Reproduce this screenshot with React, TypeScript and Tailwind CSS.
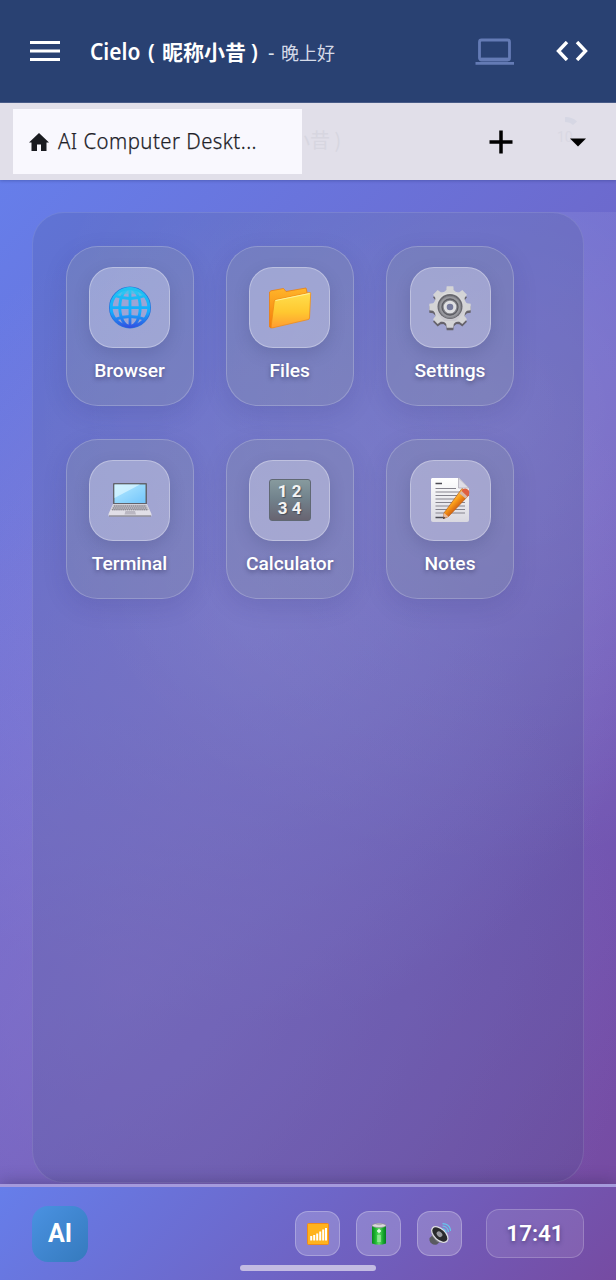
import React from 'react';

function Globe() {
  return (
    <svg viewBox="0 0 44 44" className="h-11 w-11">
      <defs><linearGradient id="gl" gradientUnits="userSpaceOnUse" x1="22" y1="2" x2="22" y2="42"><stop offset="0" stopColor="#21c3f0" /><stop offset=".6" stopColor="#12adff" /><stop offset="1" stopColor="#344be0" /></linearGradient></defs>
      <circle cx="22" cy="21.500" r="19.800" fill="none" stroke="#2775dc" strokeWidth="2.400" />
      <g fill="none" stroke="url(#gl)" strokeWidth="2.900">
        <circle cx="22" cy="21.500" r="18.800" />
        <ellipse cx="22" cy="21.500" rx="10.200" ry="19" />
        <path d="M20.600 2H23.400V41H20.600ZM2 20.200H42V23H2Z" fill="url(#gl)" stroke="none" />
        <path d="M6.500 9.500Q22 15.500 37.500 9.500M6.500 33.500Q22 27.500 37.500 33.500" />
      </g>
      <path d="M8 9Q22 -1 36 9L33 10Q22 5 11 10Z" fill="#34caf2" opacity=".6" />
    </svg>
  );
}

function Folder() {
  return (
    <svg viewBox="0 0 44 44" className="h-11 w-11">
      <defs>
        <linearGradient id="fo" x1="0" y1="0" x2="0" y2="1"><stop stopColor="#ffdf4e" /><stop offset=".55" stopColor="#ffc830" /><stop offset="1" stopColor="#ff9b31" /></linearGradient>
        <linearGradient id="fb" x1="0" y1="0" x2="0" y2="1"><stop stopColor="#ffb52a" /><stop offset="1" stopColor="#f57a08" /></linearGradient>
      </defs>
      <path d="M1.500 6L3 4.800L15.500 2.500L18 5.500L38 2L39 6L38 30L3 42L1.500 41Z" fill="url(#fb)" stroke="#e97e13" strokeWidth=".8" />
      <path d="M8 13.500L41.500 6.500Q42.800 6.300 42.700 7.500L41.500 32Q41.400 33.300 40 33.600L4 42Q3 42 3.200 40L6.300 15Q6.500 13.700 8 13.500Z" fill="url(#fo)" stroke="#f08d17" strokeWidth=".8" />
      <path d="M7.500 14.500L41.500 7.500" stroke="#fff29a" strokeWidth="1" />
    </svg>
  );
}

function Gear() {
  const teeth = [0, 45, 90, 135, 180, 225, 270, 315];
  const tooth = 'M15.500 8L18.200 5L18.700 1.300H25.300L25.800 5L28.500 8Z';
  return (
    <svg viewBox="0 0 44 46" className="h-[46px] w-11">
      <defs><linearGradient id="ge" x1="0" y1="0" x2="0" y2="1"><stop stopColor="#dedede" /><stop offset="1" stopColor="#c9c7ce" /></linearGradient></defs>
      <g transform="translate(0 2.500)" fill="#66636c"><circle cx="22" cy="22" r="16" />{teeth.map((a) => <path key={a} d={tooth} transform={`rotate(${a} 22 22)`} />)}</g>
      <g fill="url(#ge)"><circle cx="22" cy="22" r="16.300" />{teeth.map((a) => <path key={a} d={tooth} fill="#d4d4d6" transform={`rotate(${a} 22 22)`} />)}</g>
      <circle cx="22" cy="21.500" r="12.500" fill="#68686f" />
      <circle cx="22" cy="22" r="10.800" fill="#98989e" stroke="#85858b" />
      <circle cx="22" cy="22" r="8" fill="#85858c" stroke="#5c5c63" strokeWidth="1.300" />
      <circle cx="22" cy="22" r="4.800" fill="#777b9d" stroke="#dfdfe2" strokeWidth="3" />
    </svg>
  );
}

function Laptop() {
  return (
    <svg viewBox="0 0 44 44" className="h-11 w-11">
      <defs><linearGradient id="la" x1="0" y1="0" x2="1" y2="1"><stop stopColor="#b5eaff" /><stop offset="1" stopColor="#73c5fb" /></linearGradient></defs>
      <rect x="5" y="5" width="34" height="22" rx="1" fill="#63636b" />
      <rect x="6.500" y="6.500" width="31" height="18.500" fill="url(#la)" />
      <path d="M6.500 6.500H32L6.500 20Z" fill="#ddf7ff" opacity=".7" />
      <path d="M5 26H39L43.500 36V37.500Q43.500 38.500 42 38.500H2Q.5 38.500 .5 37.500V36Z" fill="#e1dfe7" />
      <path d="M5.500 26.500H38.500L41 32H3Z" fill="#c4c2ca" />
      <path d="M6 28H38M5 30H39M4 31.800H40" stroke="#77757e" strokeWidth="1" strokeDasharray="1.500 .6" />
      <path d="M17.500 33H27L28 36.500H16.500Z" fill="#bab7c2" />
      <path d="M1 38H43" stroke="#6f6c77" strokeWidth="1.200" />
    </svg>
  );
}

function Numbers() {
  return (
    <div className="grid h-[42px] w-[42px] grid-cols-[14px_14px] grid-rows-[17px_17px] content-center justify-center rounded-[3px] border border-[#606873] bg-[linear-gradient(180deg,#879a9e,#72838d_45%,#686471)] text-center text-[17px] font-bold leading-[17px] text-[#f4f4f4] [text-shadow:1px_1px_1px_#30354399]">
      <span>1</span><span>2</span><span>3</span><span>4</span>
    </div>
  );
}

function Memo() {
  return (
    <svg viewBox="0 0 44 46" className="h-[46px] w-11">
      <defs>
        <linearGradient id="me" x1="0" y1="0" x2="0" y2="1"><stop stopColor="#ffffff" /><stop offset="1" stopColor="#d9d8e0" /></linearGradient>
        <linearGradient id="pe" gradientUnits="userSpaceOnUse" x1="23" y1="22" x2="30" y2="29"><stop stopColor="#ffc14a" /><stop offset=".5" stopColor="#f99a17" /><stop offset="1" stopColor="#d86a13" /></linearGradient>
      </defs>
      <path d="M4 1H31L41 11V43Q41 45 39 45H5Q3 45 3 43V2Z" fill="url(#me)" />
      <path d="M30.500 1V11H41Z" fill="#e0dee6" stroke="#aaa8b4" strokeWidth=".7" />
      <path d="M7.500 6.500H14M7.500 40.500H16" stroke="#4c4b53" strokeWidth="1.400" />
      <path d="M7.500 11.500H28M7.500 15H37M7.500 18.500H37M7.500 22H37M7.500 25.500H37M7.500 29H37M7.500 32.500H37M7.500 36H37" stroke="#85838d" strokeWidth="1.100" />
      <path d="M16 36L15.500 41.500L20.500 39.500L41 18L34 11.500Z" fill="url(#pe)" stroke="#b5601d" strokeWidth=".7" />
      <path d="M33.500 14L35 12Q38 10.500 40.500 13Q42 15 41 17.500L39.500 20Z" fill="#df5f40" />
      <path d="M31.500 16.500L33.500 14L39.500 19.500L37.500 21.500Z" fill="#d8b7a8" />
      <path d="M16 36L15.200 41.500L20.500 39.500Z" fill="#e8ba9c" /><path d="M15.500 39.500L15 42L17.500 41Z" fill="#373037" />
    </svg>
  );
}

function Signal() {
  return <svg viewBox="0 0 22 22" className="h-[22px] w-[22px]"><rect x=".5" y=".5" width="21" height="21" rx="1" fill="#ffb31d" stroke="#f18a19" /><path d="M4.200 13V17.500M7.200 12V17.500M10.200 10.500V17.500M13.200 8.500V17.500M16.200 6.500V17.500M19 5V17.500" stroke="#fff" strokeWidth="2" /></svg>;
}

function Battery() {
  return (
    <svg viewBox="0 0 22 22" className="h-[22px] w-[22px]">
      <defs><linearGradient id="ba"><stop stopColor="#07861d" /><stop offset=".28" stopColor="#23bd35" /><stop offset=".5" stopColor="#66de6b" /><stop offset=".78" stopColor="#18aa2e" /><stop offset="1" stopColor="#067b22" /></linearGradient></defs>
      <path d="M4 2.500H18V20.500Q11 23 4 20.500Z" fill="url(#ba)" />
      <ellipse cx="11" cy="2.500" rx="7" ry="2" fill="#dbdadd" stroke="#88858a" strokeWidth=".6" /><ellipse cx="11" cy="1.300" rx="3" ry="1" fill="#b1afb4" />
      <path d="M11 6V10M9 8H13" stroke="#eaffed" strokeWidth="1.300" />
      <path d="M9 12H13V19H9Z" fill="#baf6bb" opacity=".5" />
    </svg>
  );
}

function Speaker() {
  return (
    <svg viewBox="0 0 22 22" className="h-[22px] w-[22px]">
      <path d="M.5 15L4 12L11 18.500L8 21.500Q2 22.500 .5 17.500Z" fill="#5a5a60" />
      <path d="M2.500 7L15 20L8 19L3 13Z" fill="#77777d" />
      <ellipse cx="10.800" cy="11.500" rx="9.800" ry="5.600" transform="rotate(42 10.800 11.500)" fill="#29292c" stroke="#dddce3" strokeWidth="1.300" />
      <ellipse cx="10.500" cy="11.200" rx="3.200" ry="2.400" transform="rotate(42 10.500 11.200)" fill="#98989f" />
      <path d="M13.500 5.500Q16.800 6 17.200 9.500M13.500 3Q19 3.500 19.500 9M13.500 .7Q21 1 21.700 8" fill="none" stroke="#63c8ec" strokeWidth="1.200" />
    </svg>
  );
}

const apps = [
  { name: 'Browser', icon: <Globe /> }, { name: 'Files', icon: <Folder /> }, { name: 'Settings', icon: <Gear /> },
  { name: 'Terminal', icon: <Laptop /> }, { name: 'Calculator', icon: <Numbers /> }, { name: 'Notes', icon: <Memo /> },
];

function Header() {
  return (
    <header className="flex h-[103px] items-center border-b border-[#4b5f89] bg-[#294172] pl-[30px] pr-[28px] text-white">
      <svg viewBox="0 0 30 20" className="h-5 w-[30px]"><path d="M0 1.500H30M0 10H30M0 18.500H30" stroke="white" strokeWidth="3" /></svg>
      <h1 className="ml-[30px] flex h-[34px] items-baseline whitespace-nowrap leading-[34px]">
        <span className="w-[58px] origin-left scale-x-[0.91] font-['Noto_Sans',sans-serif] text-[23px] font-semibold">Cielo</span>
        <span className="w-[14px] font-['Noto_Sans',sans-serif] text-[21px] font-semibold">(</span>
        <span className="w-[89px] font-['Noto_Sans_CJK_SC',sans-serif] text-[21px] font-bold">昵称小昔</span>
        <span className="w-[17px] font-['Noto_Sans',sans-serif] text-[21px] font-semibold">)</span>
        <span className="w-[13px] font-['Noto_Sans',sans-serif] text-[20px] text-[#dce1ec]">-</span>
        <span className="font-['Noto_Sans_CJK_SC',sans-serif] text-[18px] font-normal text-[#d5dae8]">晚上好</span>
      </h1>
      <svg viewBox="0 0 40 28" className="ml-auto mt-px h-7 w-10" fill="none" stroke="#647bb5" strokeWidth="2.800"><rect x="4.500" y="2" width="30" height="20" rx="2" /><path d="M6 21H34" /><path d="M.5 25.300H39" /></svg>
      <svg viewBox="0 0 32 20" className="ml-[41px] h-5 w-8" fill="none" stroke="white" strokeWidth="3.400"><path d="M11 1L2.500 10L11 19M21 1L29.500 10L21 19" /></svg>
    </header>
  );
}

function TabBar() {
  return (
    <div className="relative z-10 flex h-[77px] items-center bg-[#e1dfe9] pl-[13px] shadow-[0_1px_3px_#24347055]">
      <div className="z-10 flex h-[65px] w-[289px] items-center bg-[#f9f8fe] pl-[16px] text-[#202027]">
        <svg viewBox="0 0 20 18" className="h-[18px] w-5" fill="#1a1b20"><path d="M10 0L20 9.500H17.500V18H12V11.500H8V18H2.500V9.500H0Z" /></svg>
        <span className="-mt-[2px] ml-[9px] origin-left scale-x-[0.925] whitespace-nowrap font-['Noto_Sans'] text-[22px] font-light tracking-[0.5px] [-webkit-text-stroke:0.25px_#202027]">AI Computer Deskt...</span>
      </div>
      <span className="-ml-[12px] -mt-[4px] w-[62px] whitespace-nowrap font-['Noto_Sans_CJK_SC'] text-[20px] text-[#d7d6e0]">小昔 )</span>
      <svg viewBox="0 0 24 24" className="ml-[137px] h-6 w-6"><path d="M12 .5V23.500M.5 12H23.500" stroke="#000" strokeWidth="3.500" /></svg>
      <svg viewBox="0 0 36 50" className="ml-[40px] h-[50px] w-9"><path d="M12 0Q20 0 24 4.500L20 8Q17 5 12 5Z" fill="#d6d7e4" /><path d="M17 21.500H33L25 29.500Z" fill="#000" /></svg>
      <span className="-ml-[32px] -mt-[8px] -z-10 text-[14px] text-[#d9d8e3]">10</span>
    </div>
  );
}

export default function App() {
  return (
    <div className="flex h-[1280px] w-[616px] flex-col overflow-hidden font-['Roboto',sans-serif]">
      <Header /><TabBar />
      <main className="h-[1004px] bg-[linear-gradient(135deg,#667eea_0%,#764ba2_100%)] pt-8">
        <div className="h-[972px] bg-[radial-gradient(circle_at_20%_80%,rgba(144,124,206,0.5),transparent_55%),radial-gradient(circle_at_80%_20%,rgba(255,255,255,0.14),transparent_50%),radial-gradient(circle_at_40%_42%,rgba(148,144,222,0.55),transparent_60%)] px-8">
          <section className="grid h-[971px] w-[552px] grid-cols-[128px_128px_128px] grid-rows-[160px_160px] gap-x-[32.250px] gap-y-[32.600px] rounded-[32px] border border-white/10 bg-[#46548c]/20 pl-[32.500px] pt-[33px]">
            {apps.map(({ name, icon }) => (
              <div key={name} className="flex flex-col items-center rounded-[32px] border border-white/20 bg-[#8c94a8]/30 pt-5 shadow-[0_8px_24px_#25266b22]">
                <div className="flex h-[81px] w-[81px] items-center justify-center rounded-[24px] border border-white/30 bg-white/30 shadow-[0_6px_16px_#34366733]">{icon}</div>
                <span className="mt-[9px] text-[19.200px] font-medium leading-7 text-white [text-shadow:0_2px_4px_#292a5580]">{name}</span>
              </div>
            ))}
          </section>
        </div>
      </main>
      <footer className="relative h-24 border-t-[3px] border-[#a59adc] bg-[linear-gradient(135deg,#667eea_0%,#764ba2_100%)] shadow-[0_-3px_14px_#2f285055]">
        <div className="flex h-[93px] items-center px-8">
          <div className="flex h-14 w-14 items-center justify-center rounded-[16px] bg-[linear-gradient(135deg,#4a92e2,#357abd)] text-[25px] font-bold text-white">AI</div>
          <div className="ml-auto flex gap-4">
            {[<Signal key="s" />, <Battery key="b" />, <Speaker key="v" />].map((icon, i) => <div key={i} className="flex h-[45px] w-[45px] items-center justify-center rounded-[13px] border border-white/25 bg-white/20">{icon}</div>)}
          </div>
          <div className="ml-6 flex h-[49px] w-[98px] items-center justify-center rounded-[13px] border border-white/20 bg-white/10 text-[22.400px] font-semibold text-white [text-shadow:0_2px_4px_#29235a99]">17:41</div>
        </div>
        <div className="absolute bottom-[9px] left-[240px] h-[6px] w-[136px] rounded-full bg-[#c3bbe2]" />
      </footer>
    </div>
  );
}
